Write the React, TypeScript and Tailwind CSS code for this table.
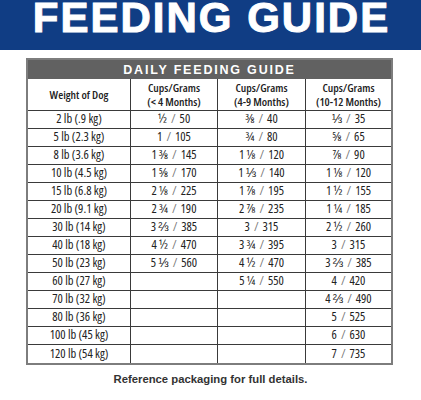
import React from "react"

const rows: [string, string, string, string][] = [
  ["2 lb (.9 kg)", "½ / 50", "⅜ / 40", "⅓ / 35"],
  ["5 lb (2.3 kg)", "1 / 105", "¾ / 80", "⅝ / 65"],
  ["8 lb (3.6 kg)", "1⅜ / 145", "1⅛ / 120", "⅞ / 90"],
  ["10 lb (4.5 kg)", "1⅝ / 170", "1⅓ / 140", "1⅛ / 120"],
  ["15 lb (6.8 kg)", "2⅛ / 225", "1⅞ / 195", "1½ / 155"],
  ["20 lb (9.1 kg)", "2¾ / 190", "2⅞ / 235", "1¼ / 185"],
  ["30 lb (14 kg)", "3⅔ / 385", "3 / 315", "2½ / 260"],
  ["40 lb (18 kg)", "4½ / 470", "3¾ / 395", "3 / 315"],
  ["50 lb (23 kg)", "5⅓ / 560", "4½ / 470", "3⅔ / 385"],
  ["60 lb (27 kg)", "", "5¼ / 550", "4 / 420"],
  ["70 lb (32 kg)", "", "", "4⅔ / 490"],
  ["80 lb (36 kg)", "", "", "5 / 525"],
  ["100 lb (45 kg)", "", "", "6 / 630"],
  ["120 lb (54 kg)", "", "", "7 / 735"],
]

const headers = ["(< 4 Months)", "(4-9 Months)", "(10-12 Months)"]

// puts a small gap between the whole number and its fraction, greys the slash
function Amount({ value }: { value: string }) {
  if (!value) return null
  const [cups, grams] = value.split(" / ")
  const m = cups.match(/^(\d*)(.*)$/)
  const whole = m ? m[1] : cups
  const frac = m ? m[2] : ""
  return (
    <span>
      {whole}
      {whole && frac ? "\u2009" : ""}
      {frac}
      <span className="text-[#777] mx-[4px]">/</span>
      {grams}
    </span>
  )
}

export default function App() {
  return (
    <div className="w-[421px] h-[400px] bg-white overflow-hidden">
      {/* Banner */}
      <div className="h-[50px] bg-[#103d84] flex justify-center overflow-hidden">
        <h1 className="mt-[-3px] text-[42px] leading-none font-bold tracking-[2px] text-white font-['Liberation_Sans',sans-serif] pl-[2px] [-webkit-text-stroke:1px_white]">
          FEEDING GUIDE
        </h1>
      </div>

      {/* Table */}
      <div className="mt-[8px] ml-[26px] w-[367px] border-2 border-[#7d7d7d] text-[#222] font-['Open_Sans',sans-serif] font-stretch-condensed">
        <div className="h-[19px] bg-[#616161] flex items-center justify-center pt-[2px]">
          <span className="text-white font-bold text-[12.5px] tracking-[1.8px] leading-none font-['Liberation_Sans',sans-serif]">
            DAILY FEEDING GUIDE
          </span>
        </div>

        <div className="grid grid-cols-[102px_87px_88px_1fr] h-[32px] border-b border-[#3a3a3a] text-[11.5px] font-semibold leading-[14px]">
          <div className="flex items-center justify-center">Weight of Dog</div>
          {headers.map((h) => (
            <div key={h} className="border-l border-[#3a3a3a] flex flex-col items-center justify-center">
              <span>Cups/Grams</span>
              <span>{h}</span>
            </div>
          ))}
        </div>

        {rows.map((r, i) => (
          <div
            key={r[0]}
            className={`grid grid-cols-[102px_87px_88px_1fr] h-[18px] text-[12.5px] font-medium leading-none ${
              i < rows.length - 1 ? "border-b border-[#3a3a3a]" : ""
            }`}
          >
            <div className="flex items-center justify-center">{r[0]}</div>
            {r.slice(1).map((v, j) => (
              <div key={j} className="border-l border-[#3a3a3a] flex items-center justify-center">
                <Amount value={v} />
              </div>
            ))}
          </div>
        ))}
      </div>

      <p className="mt-[7px] text-center text-[11.3px] leading-[14px] font-bold text-[#333] font-['Liberation_Sans',sans-serif]">
        Reference packaging for full details.
      </p>
    </div>
  )
}
